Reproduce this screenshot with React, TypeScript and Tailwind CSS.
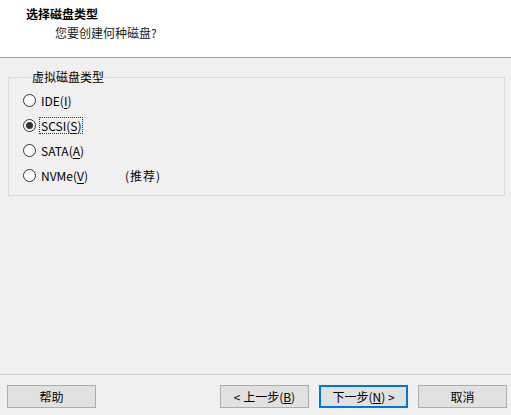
import React from "react";

const font = { fontFamily: '"Noto Sans CJK SC", "Microsoft YaHei", sans-serif' };

type Opt = { id: string; label: string; key: string; tail?: string; note?: string };

const options: Opt[] = [
  { id: "ide", label: "IDE(", key: "I", tail: ")" },
  { id: "scsi", label: "SCSI(", key: "S", tail: ")" },
  { id: "sata", label: "SATA(", key: "A", tail: ")" },
  { id: "nvme", label: "NVMe(", key: "V", tail: ")", note: "(推荐)" },
];

function Radio({ checked }: { checked: boolean }) {
  return (
    <span className="w-[13px] h-[13px] rounded-full border border-[#333333] bg-white flex items-center justify-center shrink-0">
      {checked && <span className="w-[7px] h-[7px] rounded-full bg-[#333333]" />}
    </span>
  );
}

function Btn({ children, primary }: { children: React.ReactNode; primary?: boolean }) {
  return (
    <button
      className={`w-[89px] h-[23px] bg-[#e1e1e1] text-[12px] text-black flex items-center justify-center leading-none ${
        primary ? "border-2 border-[#0078d7]" : "border border-[#adadad]"
      }`}
    >
      {children}
    </button>
  );
}

export default function App() {
  const selected = "scsi";

  return (
    <div className="w-[511px] h-[415px] bg-[#f0f0f0] flex flex-col text-[12px] text-black overflow-hidden" style={font}>
      {/* header */}
      <div className="h-[58px] bg-white border-b border-[#a0a0a0] shrink-0 pt-[6px]">
        <div className="pl-[26px] font-bold leading-[16px]">选择磁盘类型</div>
        <div className="pl-[55px] mt-[3px] leading-[16px] text-[#222]">您要创建何种磁盘?</div>
      </div>

      {/* content */}
      <div className="flex-1 pt-[11px]">
        <fieldset className="ml-[8px] mr-[6px] border border-[#dcdcdc] pl-[14px] pb-[7px]">
          <legend className="ml-[8px] px-[1px] leading-[16px]">虚拟磁盘类型</legend>
          <div className="flex flex-col pt-[3px]">
            {options.map((o) => (
              <div key={o.id} className="h-[25px] flex items-center">
                <Radio checked={o.id === selected} />
                <span
                  className={`ml-[4px] leading-[15px] px-[1px] ${
                    o.id === selected ? "outline outline-1 outline-dotted outline-[#333]" : ""
                  }`}
                >
                  {o.label}
                  <span className="underline underline-offset-2">{o.key}</span>
                  {o.tail}
                </span>
                {o.note && <span className="ml-[36px] tracking-[1px]">{o.note}</span>}
              </div>
            ))}
          </div>
        </fieldset>
      </div>

      {/* footer */}
      <div className="h-[41px] shrink-0 border-t border-[#d5d5d5] pt-[10px] flex items-start">
        <div className="ml-[7px]">
          <Btn>帮助</Btn>
        </div>
        <div className="flex-1" />
        <div className="flex gap-[10px] mr-[4px]">
          <Btn>&lt; 上一步(<span className="underline">B</span>)</Btn>
          <Btn primary>下一步(<span className="underline">N</span>) &gt;</Btn>
          <Btn>取消</Btn>
        </div>
      </div>
    </div>
  );
}
